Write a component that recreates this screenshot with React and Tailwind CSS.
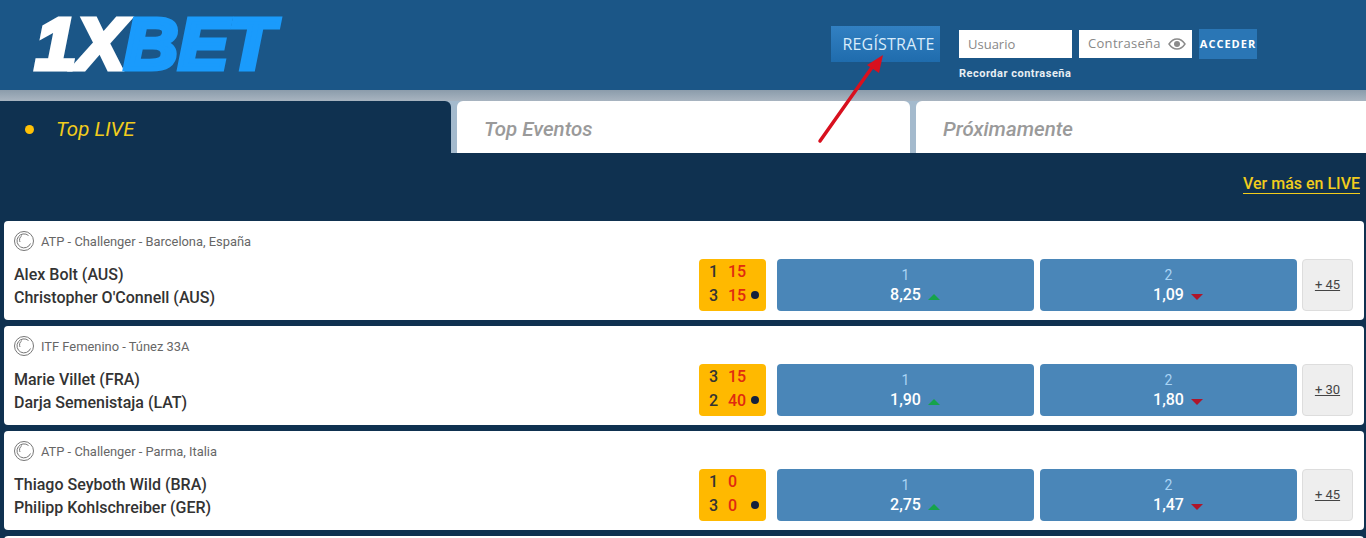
import React from 'react';

const matches = [
  { league: 'ATP - Challenger - Barcelona, España', p1: 'Alex Bolt (AUS)', p2: "Christopher O'Connell (AUS)", s1: '1', g1: '15', s2: '3', g2: '15', odd1: '8,25', odd2: '1,09', more: '+ 45' },
  { league: 'ITF Femenino - Túnez 33A', p1: 'Marie Villet (FRA)', p2: 'Darja Semenistaja (LAT)', s1: '3', g1: '15', s2: '2', g2: '40', odd1: '1,90', odd2: '1,80', more: '+ 30' },
  { league: 'ATP - Challenger - Parma, Italia', p1: 'Thiago Seyboth Wild (BRA)', p2: 'Philipp Kohlschreiber (GER)', s1: '1', g1: '0', s2: '3', g2: '0', odd1: '2,75', odd2: '1,47', more: '+ 45' },
];

const Logo = () => (
  <svg width="270" height="90" viewBox="0 0 270 90" className="block">
    <g fontFamily="'Liberation Sans', sans-serif" fontWeight="700" fontStyle="italic" fontSize="72" strokeWidth="5" strokeLinejoin="miter">
      <text x="4" y="69" fill="#ffffff" stroke="#ffffff" textLength="90" lengthAdjust="spacingAndGlyphs">1X</text>
      <text x="93" y="69" fill="#1a9bfc" stroke="#1a9bfc" textLength="150" lengthAdjust="spacingAndGlyphs">BET</text>
    </g>
  </svg>
);

const TennisBall = () => (
  <svg width="20" height="20" viewBox="0 0 20 20" fill="none" stroke="#777" strokeWidth="1">
    <circle cx="10" cy="10" r="9.5" />
    <path d="M14.5 4.5A7 7 0 1 0 16.5 12.5" />
    <path d="M8 4.5C5.5 6 5 9 6 11" />
  </svg>
);

const Eye = () => (
  <svg width="18" height="12" viewBox="0 0 18 12" fill="none" stroke="#8a8a8a" strokeWidth="1.4">
    <path d="M1 6c2-3 5-5 8-5s6 2 8 5c-2 3-5 5-8 5S3 9 1 6z" />
    <circle cx="9" cy="6" r="3" fill="#8a8a8a" stroke="none" />
  </svg>
);

const Odd = ({ label, value, up }) => (
  <div className="w-[257px] h-[52px] rounded bg-[#4a86b8] flex flex-col items-center pt-[8px]">
    <div className="text-[14px] leading-[16px] text-[#a9d4f5]">{label}</div>
    <div className="mt-[2px] flex items-center text-[16px] leading-[20px] font-medium text-white">
      <span className="ml-[19px]">{value}</span>
      {up ? (
        <span className="ml-[7px] mt-[4px] w-0 h-0 border-x-[6px] border-x-transparent border-b-[6px] border-b-[#16a34a]" />
      ) : (
        <span className="ml-[7px] mt-[3px] w-0 h-0 border-x-[6px] border-x-transparent border-t-[6px] border-t-[#b0152a]" />
      )}
    </div>
  </div>
);

const MatchCard = ({ m }) => (
  <div className="ml-[4px] mr-[2px] mb-[6px] h-[99px] shrink-0 rounded bg-white pl-[10px] pt-[10px]">
    <div className="flex items-center h-[20px] text-[12.9px] text-[#666]">
      <TennisBall />
      <span className="ml-[7px] pt-[1px]">{m.league}</span>
    </div>
    <div className="flex mt-[8px]">
      <div className="w-[685px] pt-[4px] text-[16px] leading-[23px] font-medium text-[#333]">
        <div>{m.p1}</div>
        <div>{m.p2}</div>
      </div>
      <div className="w-[67px] h-[52px] rounded bg-[#ffb900] pl-[10px] pt-[1px] text-[16px] leading-[24px] font-medium">
        <div className="flex">
          <span className="w-[19px] text-[#333]">{m.s1}</span>
          <span className="text-[#e02a10]">{m.g1}</span>
        </div>
        <div className="flex items-center">
          <span className="w-[19px] text-[#333]">{m.s2}</span>
          <span className="w-[23px] text-[#e02a10]">{m.g2}</span>
          <span className="-mt-[2px] w-[8px] h-[8px] rounded-full bg-[#14213d]" />
        </div>
      </div>
      <div className="ml-[11px] flex gap-[6px]">
        <Odd label="1" value={m.odd1} up />
        <Odd label="2" value={m.odd2} />
      </div>
      <div className="ml-[5px] w-[51px] h-[52px] rounded-sm bg-[#eeeeee] border border-[#dddddd] flex items-center justify-center text-[13px] text-[#444] underline">
        {m.more}
      </div>
    </div>
  </div>
);

export default function App() {
  return (
    <div className="relative h-[538px] w-[1366px] overflow-hidden bg-[#0f3150] font-['Roboto',sans-serif]">
      <header className="h-[90px] bg-[#1b5687] flex">
        <div className="ml-[31px]">
          <Logo />
        </div>
        <button className="ml-[530px] mt-[26px] w-[109px] h-[36px] bg-gradient-to-b from-[#3280c2] to-[#1f6cad] pl-[6px] text-[#d8ecfb] text-[16px] font-['Open_Sans',sans-serif] tracking-[0.2px]">
          REGÍSTRATE
        </button>
        <div className="ml-[19px] mt-[30px]">
          <div className="flex items-start">
            <div className="w-[113px] h-[28px] bg-white pl-[9px] text-[13px] leading-[28px] text-[#888] font-['Open_Sans',sans-serif]">Usuario</div>
            <div className="ml-[7px] w-[113px] h-[28px] bg-white pl-[9px] flex items-center justify-between pr-[6px] text-[13px] tracking-[0.3px] text-[#888] font-['Open_Sans',sans-serif]">
              Contraseña
              <Eye />
            </div>
            <button className="ml-[7px] -mt-[1px] w-[58px] h-[30px] bg-[#2a76b5] text-white text-[11px] font-bold tracking-[1px] font-['Open_Sans',sans-serif]">ACCEDER</button>
          </div>
          <div className="mt-[8px] text-[11px] leading-[14px] font-bold tracking-[0.5px] text-[#e8eef3]">Recordar contraseña</div>
        </div>
      </header>

      <div className="h-[11px] bg-gradient-to-b from-[#8b9cab] to-[#a8b4c0]" />

      <nav className="h-[52px] flex bg-[#a4bacd]">
        <div className="w-[451px] rounded-tr-md bg-[#0f3150] flex items-center pt-[4px] text-[20.5px] italic text-[#f2cc1c]">
          <span className="ml-[25px] w-[9px] h-[9px] rounded-full bg-[#ffc107]" />
          <span className="ml-[22px]">Top LIVE</span>
        </div>
        <div className="ml-[6px] w-[453px] rounded-t-md bg-white flex items-center pt-[4px] pl-[27px] text-[20.5px] italic font-medium text-[#9a9a9a]">Top Eventos</div>
        <div className="ml-[6px] flex-1 rounded-tl-md bg-white flex items-center pt-[4px] pl-[27px] text-[20.5px] italic font-medium text-[#9a9a9a]">Próximamente</div>
      </nav>

      <div className="h-[68px] flex justify-end pt-[22px] pr-[6px]">
        <span className="h-[19px] text-[16px] leading-[18px] font-medium text-[#f2cc1c] border-b border-[#f2cc1c]">Ver más en LIVE</span>
      </div>

      <div className="flex flex-col">
        {matches.map((m) => (
          <MatchCard key={m.league} m={m} />
        ))}
        <div className="ml-[4px] mr-[2px] h-[40px] shrink-0 rounded bg-white" />
      </div>

      <svg className="absolute left-[810px] top-[48px]" width="84" height="100" viewBox="0 0 84 100" fill="none">
        <path d="M10 93L63 18" stroke="#d8101e" strokeWidth="3.5" strokeLinecap="round" />
        <path d="M73 7L57 17L69 25Z" fill="#d8101e" />
      </svg>
    </div>
  );
}
